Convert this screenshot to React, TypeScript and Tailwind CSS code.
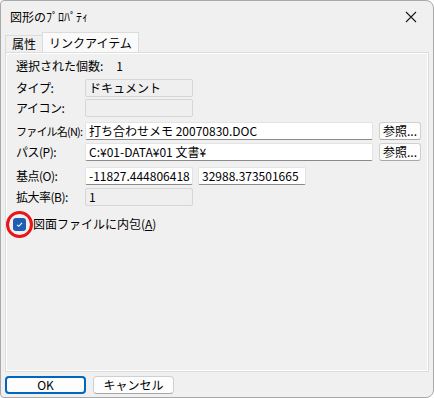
import React from "react";

const font = { fontFamily: '"Noto Sans CJK JP", "Liberation Sans", sans-serif' };

function Label({ children, tight }: { children: React.ReactNode; tight?: boolean }) {
  return (
    <div
      className={
        tight
          ? "w-[69px] shrink-0 text-[11px] leading-[14px] tracking-[-0.8px] whitespace-nowrap"
          : "w-[69px] shrink-0 text-[12px] leading-[14px] tracking-[-0.5px] whitespace-nowrap"
      }
    >
      {children}
    </div>
  );
}

function ReadBox({ w, children }: { w: string; children?: React.ReactNode }) {
  return (
    <div className={`${w} h-[18px] rounded-[2px] border border-[#d6d6d6] bg-[#efefef] px-[3px] text-[12px] leading-[16px] whitespace-nowrap overflow-hidden`}>
      {children}
    </div>
  );
}

function Input({ w, children }: { w: string; children?: React.ReactNode }) {
  return (
    <div className={`${w} h-[18px] rounded-[2px] border border-[#e3e3e3] border-b-[#8a8a8a] bg-white px-[3px] text-[12px] leading-[16px] whitespace-nowrap overflow-hidden`}>
      {children}
    </div>
  );
}

function RefBtn() {
  return (
    <div className="w-[42px] h-[18px] rounded-[3px] border border-[#d0d0d0] border-b-[#a8a8a8] bg-[#fdfdfd] text-[12px] leading-[16px] text-center">
      参照...
    </div>
  );
}

export default function App() {
  return (
    <div className="w-[434px] h-[398px] bg-white" style={font}>
      <div className="w-[434px] h-[398px] bg-[#f0f0f0] border border-[#a9a9a9] rounded-tr-[8px] rounded-br-[8px] rounded-tl-[4px] rounded-bl-[4px] flex flex-col text-black">
        {/* title bar */}
        <div className="h-[31px] shrink-0 flex items-center justify-between pl-[9px] pr-[16px]">
          <span className="text-[12px] leading-[14px]">図形のﾌﾟﾛﾊﾟﾃｨ</span>
          <svg width="12" height="12" viewBox="0 0 12 12">
            <path d="M1 1 L11 11 M11 1 L1 11" stroke="#1a1a1a" strokeWidth="1.1" />
          </svg>
        </div>
        {/* tabs */}
        <div className="h-[20px] shrink-0 flex items-end pl-[4px]">
          <div className="h-[17px] px-[6px] border border-b-0 border-[#dcdcdc] bg-[#f0f0f0] text-[12px] leading-[16px]">属性</div>
          <div className="h-[20px] px-[6px] border border-b-0 border-[#dcdcdc] bg-[#fafafa] text-[12px] leading-[19px] -ml-px">リンクアイテム</div>
        </div>
        {/* panel */}
        <div className="mx-[4px] h-[320px] shrink-0 border border-[#dcdcdc] bg-[#f0f0f0] flex flex-col">
          <div className="flex-1 border border-white flex flex-col pl-[9px]">
            <div className="mt-[5px] h-[14px] flex items-center text-[12px] leading-[14px]">
              <span>選択された個数:</span>
              <span className="ml-[13px]">1</span>
            </div>
            <div className="mt-[6px] h-[18px] flex items-center">
              <Label>タイプ:</Label>
              <ReadBox w="w-[108px]">ドキュメント</ReadBox>
            </div>
            <div className="mt-[2px] h-[18px] flex items-center">
              <Label>アイコン:</Label>
              <ReadBox w="w-[108px]" />
            </div>
            <div className="mt-[5px] h-[18px] flex items-center">
              <Label tight>ファイル名(N):</Label>
              <Input w="w-[288px]">打ち合わせメモ 20070830.DOC</Input>
              <div className="ml-[6px]"><RefBtn /></div>
            </div>
            <div className="mt-[3px] h-[18px] flex items-center">
              <Label>パス(P):</Label>
              <Input w="w-[288px]">C:¥01-DATA¥01 文書¥</Input>
              <div className="ml-[6px]"><RefBtn /></div>
            </div>
            <div className="mt-[6px] h-[18px] flex items-center">
              <Label>基点(O):</Label>
              <Input w="w-[108px]">-11827.444806418</Input>
              <div className="ml-[5px]"><Input w="w-[108px]">32988.373501665</Input></div>
            </div>
            <div className="mt-[3px] h-[18px] flex items-center">
              <Label>拡大率(B):</Label>
              <ReadBox w="w-[108px]">1</ReadBox>
            </div>
            <div className="mt-[10px] h-[16px] flex items-center -ml-[3px]">
              <div className="relative w-[13px] h-[13px] rounded-[3px] bg-[#1f5fb3] flex items-center justify-center">
                <svg width="9" height="9" viewBox="0 0 9 9">
                  <path d="M2 4.8 L3.8 6.3 L7 2.8" stroke="white" strokeWidth="1.1" fill="none" />
                </svg>
                <div className="absolute left-[-7px] top-[-7px] w-[27px] h-[27px] rounded-full border-[3px] border-[#e8161b]" />
              </div>
              <span className="ml-[7px] text-[12px] leading-[14px]">
                図面ファイルに内包(<span className="underline">A</span>)
              </span>
            </div>
          </div>
        </div>
        {/* buttons */}
        <div className="mt-[4px] pl-[4px] flex gap-[7px]">
          <div className="w-[81px] h-[18px] rounded-[4px] border-2 border-[#0067c0] bg-[#fdfdfd] text-[12px] leading-[14px] text-center">OK</div>
          <div className="w-[81px] h-[18px] rounded-[4px] border border-[#d0d0d0] border-b-[#a8a8a8] bg-[#fdfdfd] text-[12px] leading-[16px] text-center">キャンセル</div>
        </div>
      </div>
    </div>
  );
}
